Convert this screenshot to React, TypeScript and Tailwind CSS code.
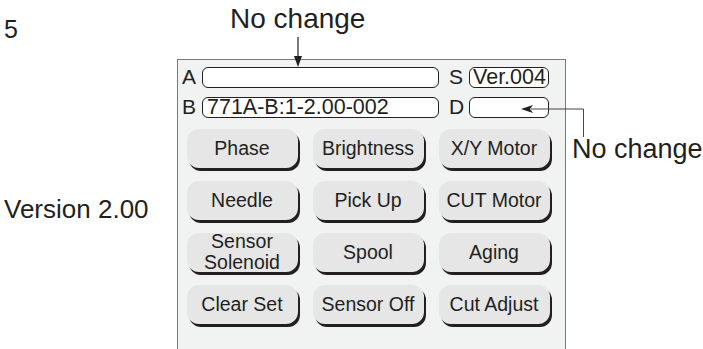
import React from "react";

const font = { fontFamily: '"Liberation Sans", Arial, sans-serif' };

function Field({ label, width, children, center, labelW }: { label: string; width: string; children?: React.ReactNode; center?: boolean; labelW: string }) {
  return (
    <div className="flex items-center">
      <span className={`${labelW} text-[21px] leading-[20px]`}>{label}</span>
      <div
        className={`${width} h-[21px] rounded-[6px] border-[1.5px] border-[#231f20] bg-white flex items-center ${center ? "justify-center pl-[1px]" : "pl-[4px]"} text-[21.5px] leading-[17px] whitespace-nowrap`}
      >
        {children}
      </div>
    </div>
  );
}

function Btn({ children }: { children: React.ReactNode }) {
  return (
    <div className="h-[39px] w-[111px] rounded-[12px] bg-[#e6e6e7] shadow-[2px_3px_0_0_#231f20] flex items-center justify-center text-center text-[19.5px] leading-[21px] whitespace-nowrap">
      {children}
    </div>
  );
}

export default function App() {
  const labels: React.ReactNode[] = [
    "Phase",
    "Brightness",
    "X/Y Motor",
    "Needle",
    "Pick Up",
    "CUT Motor",
    <>
      Sensor
      <br />
      Solenoid
    </>,
    "Spool",
    "Aging",
    "Clear Set",
    "Sensor Off",
    "Cut Adjust",
  ];
  return (
    <div className="relative w-[703px] h-[349px] overflow-hidden bg-white text-[#231f20]" style={font}>
      <div className="flex">
        <div className="w-[177px] shrink-0 flex flex-col pl-[4px]">
          <div className="mt-[15px] text-[25px] leading-[28px]">5</div>
          <div className="mt-[152px] text-[26px] leading-[28px]">Version 2.00</div>
        </div>
        <div className="mt-[59px] w-[389px] h-[300px] border-[1.5px] border-[#7a7a7a] bg-[#f1f2f2]">
          <div className="pt-[6.5px] pl-[4px] flex flex-col gap-[9px]">
            <div className="flex">
              <Field label="A" labelW="w-[20px]" width="w-[237px]" />
              <div className="ml-[10px]">
                <Field label="S" labelW="w-[20px]" width="w-[80px]" center>
                  Ver.004
                </Field>
              </div>
            </div>
            <div className="flex">
              <Field label="B" labelW="w-[20px]" width="w-[237px]">
                771A-B:1-2.00-002
              </Field>
              <div className="ml-[10px]">
                <Field label="D" labelW="w-[20px]" width="w-[80px]" />
              </div>
            </div>
          </div>
          <div className="mt-[11px] ml-[8.5px] grid grid-cols-[111px_111px_111px] gap-x-[15px] gap-y-[13px]">
            {labels.map((l, i) => (
              <Btn key={i}>{l}</Btn>
            ))}
          </div>
        </div>
      </div>

      <div className="absolute left-[230px] top-[3px] text-[28px] leading-[32px]">No change</div>
      <div className="absolute left-[572px] top-[134px] text-[27px] leading-[30px]">No change</div>

      <svg className="absolute left-0 top-0 pointer-events-none" width="703" height="349">
        <line x1="298" y1="37" x2="298" y2="58" stroke="#231f20" strokeWidth="1.2" />
        <polygon points="294,56 302,56 298,67" fill="#231f20" />
        <polyline points="531,109 583.5,109 583.5,137" fill="none" stroke="#444" strokeWidth="1" />
        <polygon points="521,109 533,105 530,109 533,113" fill="#231f20" />
      </svg>
    </div>
  );
}
